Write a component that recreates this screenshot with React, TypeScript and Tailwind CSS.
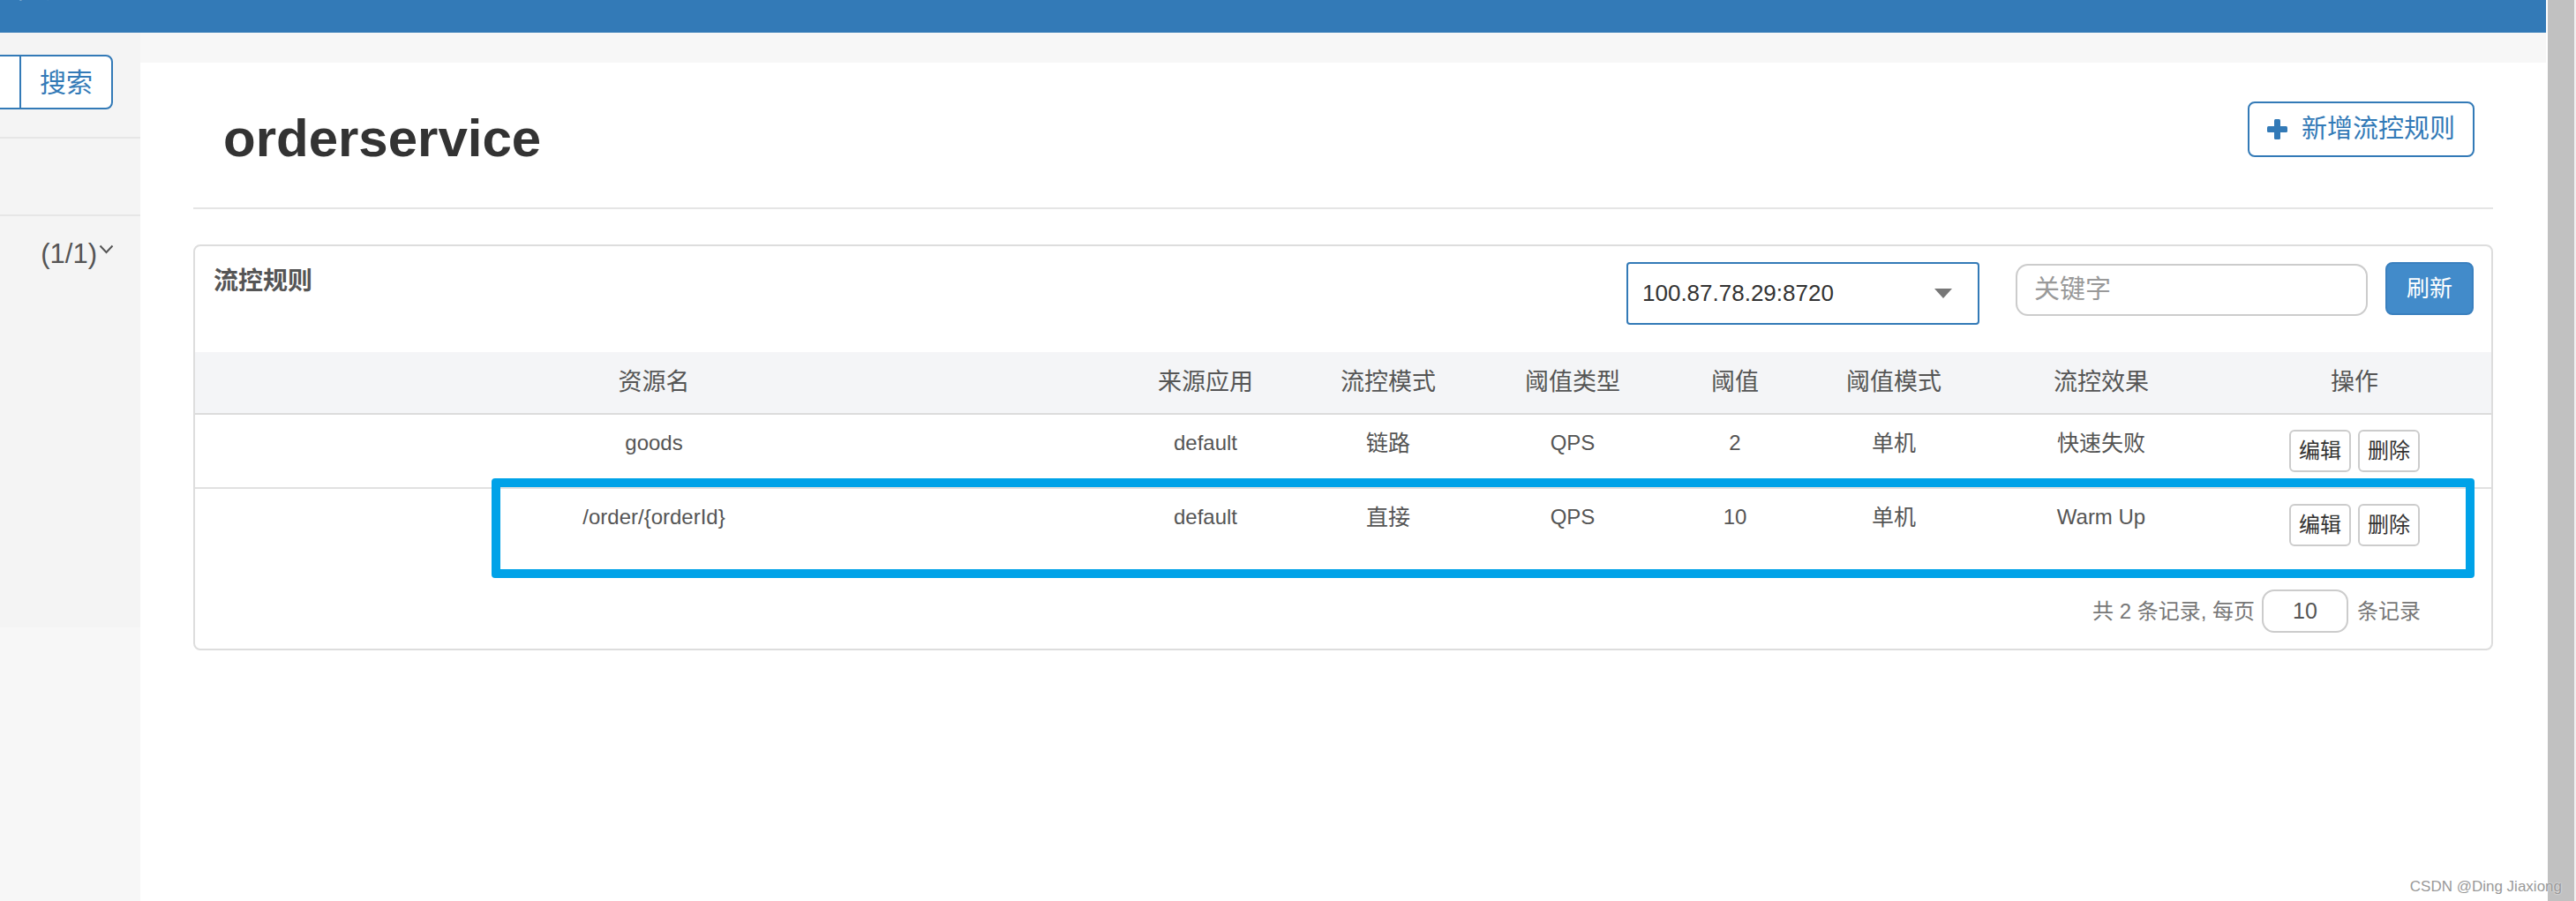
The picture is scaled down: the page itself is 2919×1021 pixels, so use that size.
import React from 'react';

interface Rule {
  resource: string;
  app: string;
  mode: string;
  grade: string;
  count: string;
  cluster: string;
  effect: string;
}

const cols = [
  'w-[1040px]',
  'w-[210px]',
  'w-[204px]',
  'w-[214px]',
  'w-[154px]',
  'w-[206px]',
  'w-[264px]',
  'w-[310px]',
];

const headers = ['资源名', '来源应用', '流控模式', '阈值类型', '阈值', '阈值模式', '流控效果', '操作'];

const rules: Rule[] = [
  { resource: 'goods', app: 'default', mode: '链路', grade: 'QPS', count: '2', cluster: '单机', effect: '快速失败' },
  { resource: '/order/{orderId}', app: 'default', mode: '直接', grade: 'QPS', count: '10', cluster: '单机', effect: 'Warm Up' },
];

const isCjk = (s: string) => /[\u4e00-\u9fff]/.test(s);

const Sidebar: React.FC = () => (
  <div className="w-[159px] shrink-0 flex flex-col">
    <div className="h-[674px] bg-[#f4f4f4] flex flex-col">
      <div className="pt-[25px] flex h-[87px]">
        <div className="w-[22px] h-[62px] border-y-2 border-[#337ab7] bg-white" />
        <div className="w-[106px] h-[62px] border-2 border-[#337ab7] rounded-r-[8px] bg-white flex items-center justify-center text-[30px] text-[#337ab7]">
          搜索
        </div>
      </div>
      <div className="mt-[31px] h-[2px] bg-[#e6e6e6]" />
      <div className="mt-[86px] h-[2px] bg-[#e6e6e6]" />
      <div className="flex justify-end items-start pr-[30px] pt-[25px] text-[31px] leading-[36px] text-[#555]">
        <span>(1/1)</span>
        <svg className="mt-[7px] ml-[2px]" width="17" height="11" viewBox="0 0 17 11">
          <path d="M1.5 1.5 L8.5 9 L15.5 1.5" fill="none" stroke="#555" strokeWidth="2" />
        </svg>
      </div>
    </div>
    <div className="flex-1 bg-[#f7f7f7]" />
  </div>
);

const RuleTable: React.FC = () => (
  <div className="relative mt-[40px] border-2 border-[#dddddd] rounded-[8px] bg-white">
    {/* panel heading */}
    <div className="h-[120px] flex items-start pl-[21px] pr-[20px]">
      <div className="mt-[20px] text-[28px] leading-[40px] font-bold text-[#555]">流控规则</div>
      <div className="ml-auto mt-[18px] w-[400px] h-[71px] border-2 border-[#337ab7] rounded-[4px] bg-white flex items-center pl-[16px] text-[26px] text-[#333]">
        <span>100.87.78.29:8720</span>
        <span className="ml-auto mr-[29px] w-0 h-0 border-x-[10px] border-x-transparent border-t-[11px] border-t-[#777]" />
      </div>
      <div className="ml-[41px] mt-[20px] w-[399px] h-[59px] border-2 border-[#cccccc] rounded-[14px] flex items-center pl-[19px] text-[29px] text-[#999]">
        关键字
      </div>
      <div className="ml-[20px] mt-[18px] w-[100px] h-[60px] rounded-[8px] bg-[#428bca] border-2 border-[#3a80bf] flex items-center justify-center text-[26px] text-white">
        刷新
      </div>
    </div>

    {/* table header */}
    <div className="h-[71px] flex items-center bg-[#f4f5f7] border-b-2 border-[#dcdcdc] text-[27px] text-[#555]">
      {headers.map((h, i) => (
        <div key={h} className={`${cols[i]} shrink-0 text-center`}>
          {h}
        </div>
      ))}
    </div>

    {/* rows */}
    {rules.map((r, idx) => {
      const values = [r.resource, r.app, r.mode, r.grade, r.count, r.cluster, r.effect];
      return (
        <div
          key={r.resource}
          className={`h-[84px] flex items-start text-[#555] ${idx === 0 ? 'border-b-2 border-[#e1e1e1]' : ''}`}
        >
          {values.map((v, i) => (
            <div
              key={i}
              className={`${cols[i]} shrink-0 text-center pt-[12px] leading-[40px] ${isCjk(v) ? 'text-[25px]' : 'text-[24px]'}`}
            >
              {v}
            </div>
          ))}
          <div className={`${cols[7]} shrink-0 flex justify-center gap-[8px] pt-[17px]`}>
            <button className="w-[70px] h-[48px] border-2 border-[#cccccc] rounded-[6px] bg-white text-[24px] text-[#333]">编辑</button>
            <button className="w-[70px] h-[48px] border-2 border-[#cccccc] rounded-[6px] bg-white text-[24px] text-[#333]">删除</button>
          </div>
        </div>
      );
    })}

    {/* pagination */}
    <div className="flex justify-end items-center pt-[30px] pb-[18px] pr-[80px] text-[24px] text-[#777]">
      <span>共 2 条记录, 每页</span>
      <div className="ml-[8px] w-[98px] h-[49px] border-2 border-[#cccccc] rounded-[14px] flex items-center justify-center text-[25px] text-[#555]">
        10
      </div>
      <span className="ml-[10px]">条记录</span>
    </div>

    {/* highlight annotation */}
    <div className="absolute left-[336px] top-[263px] w-[2247px] h-[113px] border-[10px] border-[#00a2e8] rounded-[4px] pointer-events-none" />
  </div>
);

export default function App() {
  return (
    <div className="relative w-[2919px] h-[1021px] overflow-hidden flex bg-white font-['Liberation_Sans','Noto_Sans_CJK_SC',sans-serif]">
      <div className="w-[2885px] shrink-0 flex flex-col">
        <div className="h-[37px] shrink-0 bg-[#337ab7] overflow-hidden">
          <div className="-mt-[30px] -ml-[14px] text-[32px] leading-[32px] text-white">机器列表</div>
        </div>
        <div className="flex-1 flex">
          <Sidebar />
          <div className="flex-1 flex flex-col bg-[#f7f7f7]">
            <div className="mt-[34px] flex-1 bg-white px-[60px]">
              <div className="flex items-start pt-[44px]">
                <h2 className="ml-[34px] mt-[9px] text-[60px] leading-[66px] font-bold text-[#333]">orderservice</h2>
                <button className="ml-auto mr-[21px] w-[257px] h-[63px] border-2 border-[#337ab7] rounded-[8px] bg-white flex items-center justify-center gap-[16px] text-[29px] text-[#337ab7]">
                  <svg width="23" height="23" viewBox="0 0 23 23">
                    <rect x="8" y="0" width="7" height="23" rx="1.5" fill="#337ab7" />
                    <rect x="0" y="8" width="23" height="7" rx="1.5" fill="#337ab7" />
                  </svg>
                  <span>新增流控规则</span>
                </button>
              </div>
              <div className="mt-[45px] h-[2px] bg-[#e5e5e5]" />
              <RuleTable />
            </div>
          </div>
        </div>
      </div>
      <div className="w-[34px] shrink-0 flex">
        <div className="w-[2px] bg-white" />
        <div className="w-[30px] bg-[#c1c1c1]" />
        <div className="w-[2px] bg-[#f0f0f0]" />
      </div>
      <div className="absolute right-[16px] bottom-[6px] text-[17px] leading-[20px] text-[#999] [text-shadow:0_0_2px_#fff]">
        CSDN @Ding Jiaxiong
      </div>
    </div>
  );
}
